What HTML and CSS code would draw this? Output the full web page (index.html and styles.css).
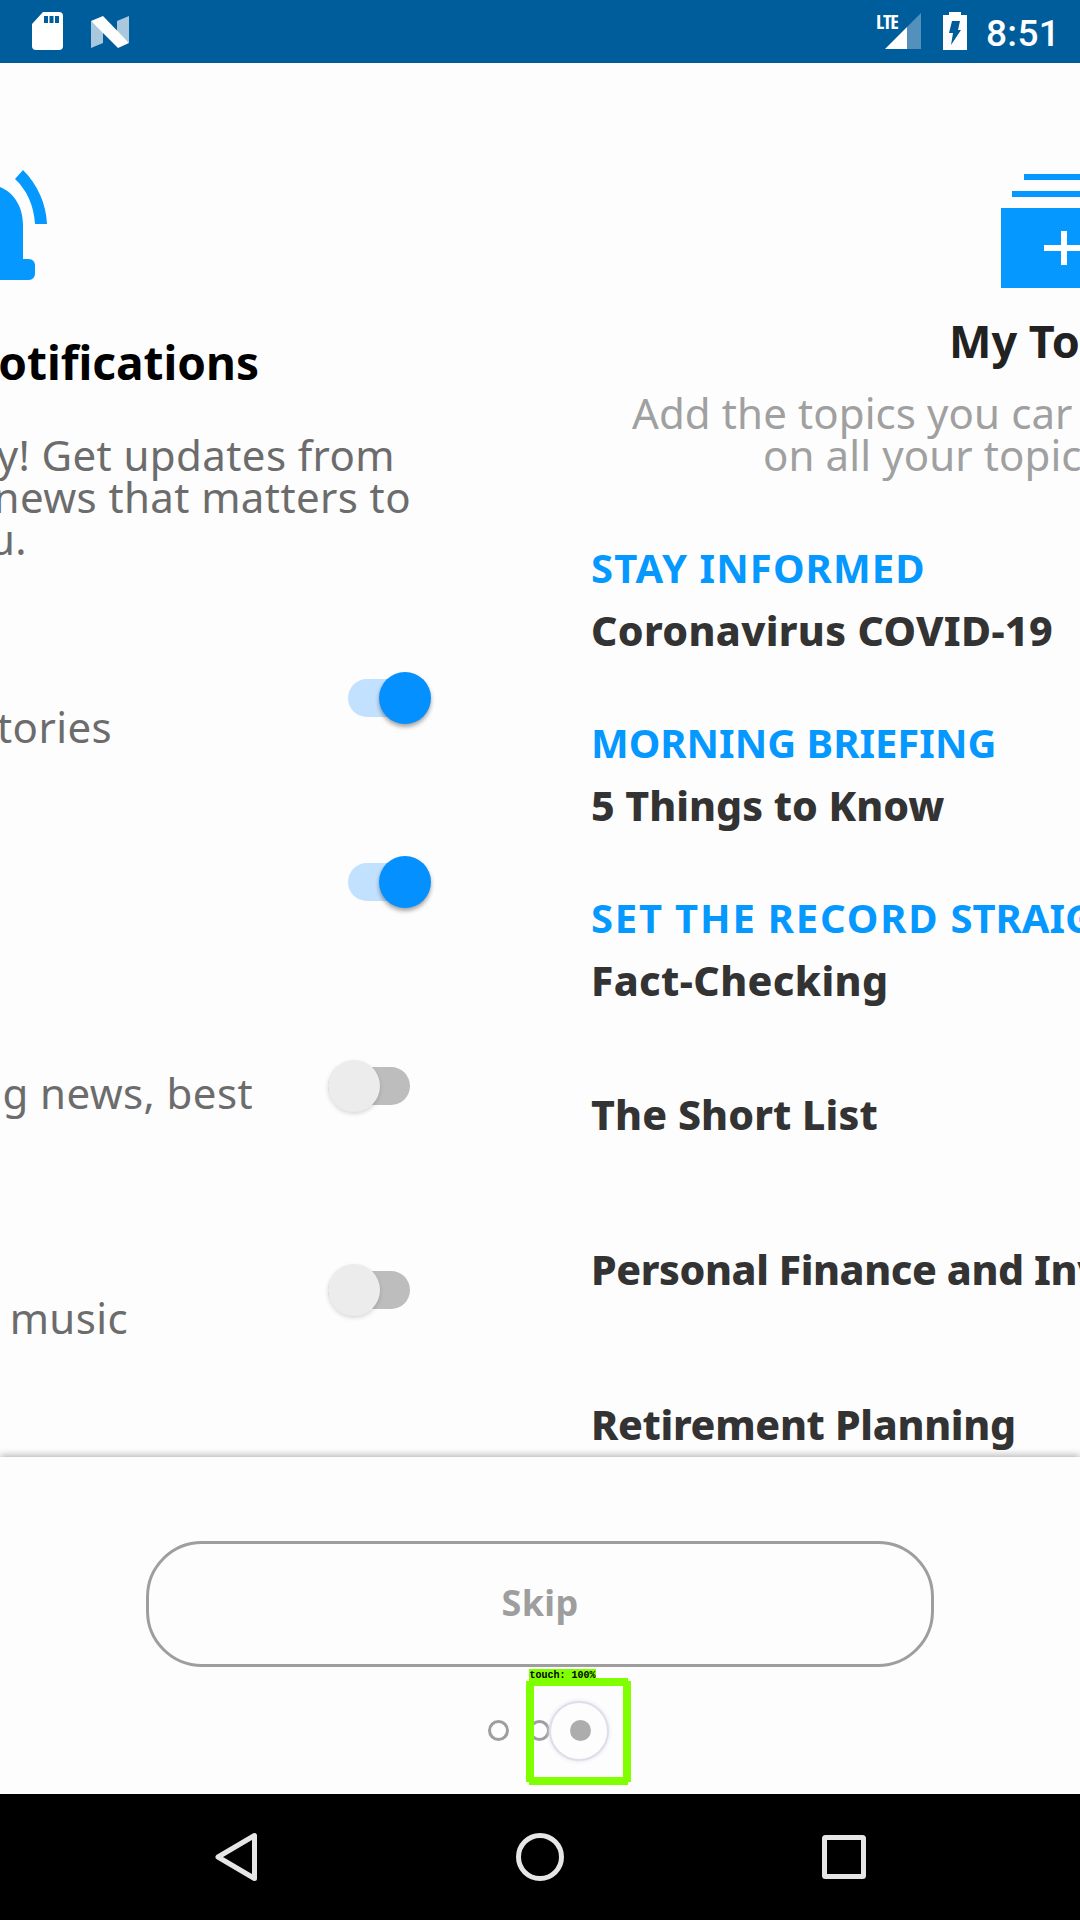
FILE: index.html
```html
<!DOCTYPE html>
<html lang="en">
<head>
<meta charset="utf-8">
<title>Onboarding</title>
<link rel="stylesheet" href="styles.css">
</head>
<body>
<header class="status">
  <svg class="status-sd" viewBox="0 0 31 38"><path fill="#fff" d="M11 0H27a4 4 0 0 1 4 4V34a4 4 0 0 1-4 4H4a4 4 0 0 1-4-4V12Z"/><path fill="#005d9b" d="M12 4h4v7h-4zM17.500 4h4v7h-4zM23 4h4v7h-4z"/></svg>
  <svg class="status-n" viewBox="0 0 38 32"><path fill="#a9c8de" d="M0 5L12 15V27L0 32ZM26 5L38 0V27L26 17Z"/><path fill="#fff" d="M0 5L12 0L38 27L27 32Z"/></svg>
  <span class="status-lte">LTE</span>
  <svg class="status-signal" viewBox="0 0 36 36"><path fill="#5490bc" d="M36 0V36H22V14Z"/><path fill="#fff" d="M0 36L22 14V36Z"/></svg>
  <svg class="status-battery" viewBox="0 0 24 38"><path fill="#fff" d="M6 0h12v3h6v35H0V3h6z"/><path fill="#005d9b" d="M9 9h8l-2 9h3L8 33l2-12H6z"/></svg>
  <span class="status-time">8:51</span>
</header>

<main class="pager">
  <section class="page page-alerts">
    <svg class="bell" viewBox="0 0 60 110"><path fill="#0598ff" d="M0 17C15 23 23 38 23 55V89H29a6 6 0 0 1 6 6V104a6 6 0 0 1-6 6H0ZM15 9L23 0C38 15 46 34 47 54H35C34 36 27 20 15 9Z"/></svg>
    <h1 class="alerts-title">otifications</h1>
    <div class="intro">
      <p class="intro-a">y! Get updates from</p>
      <p class="intro-b">news that matters to</p>
      <p class="intro-c">u.</p>
    </div>
    <div class="row row-stories"><p>tories</p><span class="toggle on"></span></div>
    <div class="row row-second"><p></p><span class="toggle on"></span></div>
    <div class="row row-best"><p>g news, best</p><span class="toggle"></span></div>
    <div class="row row-music"><p>music</p><span class="toggle"></span></div>
  </section>

  <section class="page page-topics">
    <svg class="cards" viewBox="0 0 126 114"><path fill="#0598ff" d="M23 0h80v6H23zM11 17h104v6H11zM0 34h126v80H0z"/><path fill="#fff" d="M60 57h6v14h17v6H66v14h-6V77H43v-6h17z"/></svg>
    <h1 class="topics-title">My To</h1>
    <p class="lead lead-a">Add the topics you car</p>
    <p class="lead lead-b">on all your topic</p>
    <ul class="groups">
      <li><h2 class="stay">STAY INFORMED</h2><p class="corona">Coronavirus COVID-19</p></li>
      <li><h2 class="morning">MORNING BRIEFING</h2><p class="five">5 Things to Know</p></li>
      <li><h2 class="record">SET THE RECORD <span class="tight">STRAIG</span></h2><p class="fact">Fact-Checking</p></li>
    </ul>
    <ul class="topics">
      <li class="short-list">The Short List</li>
      <li class="finance">Personal Finance and Inv</li>
      <li class="retire">Retirement Planning</li>
    </ul>
  </section>
</main>

<footer class="footer">
  <button class="skip">Skip</button>
  <div class="dots">
    <i class="dot"></i><i class="dot"></i><i class="dot active"></i>
    <div class="press"></div>
    <div class="marker"><svg viewBox="0 0 105 107"><path fill="#80ff00" fill-rule="evenodd" d="M3 0H102V3H105V104H102V107H3V104H0V3H3ZM8 8V99H97V8Z"/></svg><span class="marker-label">touch: 100%</span></div>
  </div>
</footer>

<nav class="nav">
  <svg class="nav-back" viewBox="0 0 50 50"><path d="M39.500 3.500V46.500L3 25Z"/></svg>
  <svg viewBox="0 0 50 50"><circle cx="25" cy="25" r="21.500"/></svg>
  <svg viewBox="0 0 50 50"><rect x="5.500" y="5.500" width="39" height="39" rx="1"/></svg>
</nav>
</body>
</html>
```
FILE: styles.css
```css
* { box-sizing: border-box; margin: 0; padding: 0; }
body { width: 1080px; height: 1920px; overflow: hidden; display: flex; flex-direction: column; background: #fdfdfd; font: 400 42px "Noto Sans", "Open Sans", sans-serif; white-space: nowrap; }
ul { list-style: none; }
svg { display: block; flex: none; }

.status { height: 63px; flex: none; background: #005d9b; color: #fff; display: flex; align-items: flex-start; padding: 12px 26px 0 32px; }
.status-sd { width: 31px; height: 38px; }
.status-n { width: 38px; height: 32px; margin: 4px 0 0 28px; }
.status-lte { margin: 0 -16px 0 auto; width: 25px; font: 700 20px/20px "Open Sans", sans-serif; font-stretch: 75%; letter-spacing: -1.2px; }
.status-signal { width: 36px; height: 36px; margin: 1px 22px 0 0; }
.status-battery { width: 24px; height: 38px; margin-right: 19px; }
.status-time { font: 500 37px/43px Roboto, sans-serif; letter-spacing: .3px; width: 68px; }

.pager { height: 1394px; flex: none; display: flex; overflow: hidden; }
.page { width: 540px; flex: none; overflow: hidden; display: flex; flex-direction: column; align-items: flex-start; }

.page-alerts { padding-top: 107px; color: #6c6c6c; }
.bell { width: 60px; height: 110px; }
.alerts-title { width: 259px; margin-top: 52px; display: flex; justify-content: flex-end; font-size: 46px; line-height: 60px; color: #000; }
.intro { margin: 42px 0 100px; line-height: 42px; letter-spacing: .4px; }
.intro p, .row p { display: flex; justify-content: flex-end; }
.intro-a { width: 395px; }
.intro-b { width: 411px; }
.intro-c { width: 27px; }
.row { display: grid; grid-template-columns: 328px 110px; align-items: start; line-height: 48px; letter-spacing: .4px; flex: none; }
.row-stories { height: 184px; }
.row-stories p { width: 112px; padding-top: 43px; }
.row-second { height: 204px; }
.row-best { height: 204px; }
.row-best p { width: 253px; padding-top: 21px; }
.row-music { height: 204px; }
.row-music p { width: 128px; padding-top: 42px; }

.toggle { display: flex; align-items: center; width: 82px; height: 38px; margin-top: 19px; border-radius: 19px; background: #bdbdbd; }
.toggle::before { content: ""; width: 52px; height: 52px; border-radius: 50%; background: #ececec; box-shadow: 0 2px 4px rgba(0,0,0,.15); flex: none; }
.toggle.on { margin-left: 20px; background: #c2e1ff; justify-content: flex-end; }
.toggle.on::before { background: #0590ff; box-shadow: 0 3px 4px rgba(0,0,0,.35); margin-right: -1px; }

.page-topics { padding: 111px 0 0 51px; }
.cards { width: 126px; height: 114px; margin-left: 410px; }
.topics-title { margin: 23px 0 0 358px; font-size: 45px; line-height: 60px; color: #222; }
.lead { color: #a0a0a0; line-height: 42px; letter-spacing: .1px; }
.lead-a { margin: 21px 0 0 41px; }
.lead-b { margin-left: 172px; }
.groups { margin-top: 60px; display: flex; flex-direction: column; gap: 49px; }
.groups h2 { font-size: 40px; line-height: 63px; color: #0598ff; }
.groups p { font-size: 41px; font-weight: 800; line-height: 63px; color: #333; }
.groups .stay { letter-spacing: 1.1px; }
.groups .morning { letter-spacing: 0; }
.groups .record { letter-spacing: 1.8px; word-spacing: -1px; }
.tight { letter-spacing: 0; }
.corona { letter-spacing: .35px; }
.five { letter-spacing: 0; }
.fact { letter-spacing: .4px; }
.topics { margin-top: 25px; font-size: 41px; font-weight: 800; line-height: 155px; color: #333; }
.short-list { letter-spacing: .1px; }
.finance { letter-spacing: -.4px; }
.retire { letter-spacing: -.3px; }

.footer { height: 337px; flex: none; padding-top: 84px; display: flex; flex-direction: column; align-items: center; background: #fdfdfd; box-shadow: 0 -2px 7px rgba(0,0,0,.28); position: relative; }
.skip { width: 788px; height: 126px; padding-bottom: 3px; border: 3px solid #9e9e9e; border-radius: 56px; background: none; color: #9e9e9e; font: 700 36px "Noto Sans", sans-serif; letter-spacing: .3px; }
.dots { position: relative; margin: 53px 2px 0 0; display: flex; gap: 20px; }
.dot { width: 21px; height: 21px; border: 3px solid #9e9e9e; border-radius: 50%; }
.dot.active { position: relative; z-index: 2; border: 0; background: #adadad; }
/* touch feedback and its detection box lie over the page dots */
.press { position: absolute; left: 61px; top: -19px; width: 60px; height: 60px; border-radius: 50%; border: 2px solid #dedeea; background: #fdfdfd; box-shadow: 0 0 4px #e4e2f2; }
.marker { position: absolute; z-index: 3; left: 38px; top: -42px; width: 105px; height: 107px; }
.marker-label { position: absolute; left: 3px; top: -9px; width: 67px; height: 12px; padding-left: 1px; background: #80ff00; color: #000; font: 700 10px/14px "Liberation Mono", monospace; }

.nav { height: 126px; flex: none; background: #000; display: flex; align-items: center; justify-content: space-between; padding: 0 211px; }
.nav svg { width: 50px; height: 50px; fill: none; stroke: #e6e6e6; stroke-width: 5; stroke-linejoin: round; }
.nav .nav-back { margin: 0 -4px 0 4px; }
```
